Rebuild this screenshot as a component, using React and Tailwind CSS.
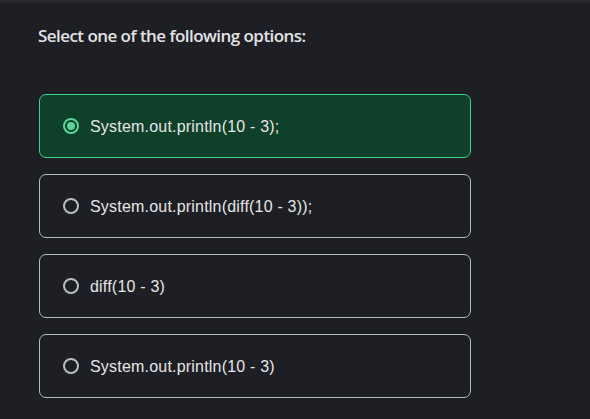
const options = [
  "System.out.println(10 - 3);",
  "System.out.println(diff(10 - 3));",
  "diff(10 - 3)",
  "System.out.println(10 - 3)",
];

export default function App() {
  const selected = 0;
  return (
    <div className="w-[590px] h-[419px] bg-[#1e1f24] border-t-[3px] border-[#26282d] overflow-hidden">
      <div className="pl-[38px] pt-[21px]">
        <h2 className="text-[17px] font-semibold tracking-[-0.55px] text-[#e3e3e6] leading-[24px] font-['Open_Sans',sans-serif]">
          Select one of the following options:
        </h2>
      </div>
      <div className="mt-[46px] ml-[39px] w-[432px] flex flex-col gap-[16px]">
        {options.map((opt, i) => {
          const isSel = i === selected;
          return (
            <div
              key={i}
              className={`h-[64px] rounded-[7px] border flex items-center pl-[23px] ${
                isSel ? "border-[#3dd68c] bg-[#0f4029]" : "border-[#b4bcbf] bg-[#1e1f24]"
              }`}
            >
              {isSel ? (
                <span className="w-[16px] h-[16px] rounded-full border-2 border-[#5ad498] flex items-center justify-center">
                  <span className="w-[8px] h-[8px] rounded-full bg-[#5ad498]" />
                </span>
              ) : (
                <span className="w-[16px] h-[16px] rounded-full border-2 border-[#b9bcbf]" />
              )}
              <span className="ml-[11px] pt-[2px] text-[16px] tracking-[0.2px] text-[#e6e6e6] font-['Liberation_Sans',Arial,sans-serif]">
                {opt}
              </span>
            </div>
          );
        })}
      </div>
    </div>
  );
}
